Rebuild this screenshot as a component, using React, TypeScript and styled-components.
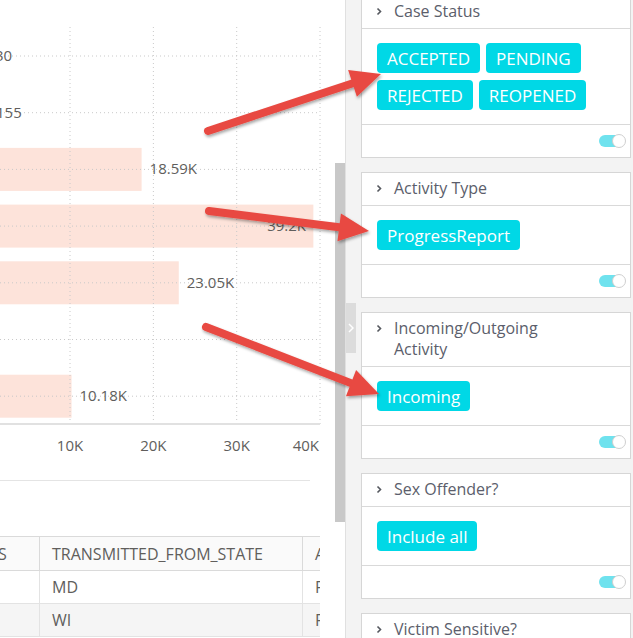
import React from "react";
import styled, { createGlobalStyle } from "styled-components";

const GlobalStyle = createGlobalStyle`
  html, body {
    margin: 0;
    padding: 0;
    background: #ffffff;
    overflow: hidden;
  }
  body {
    font-family: "Open Sans", "Noto Sans", sans-serif;
  }
`;

// chart data (values in units, null = no bar)
const chartValues: (number | null)[] = [30, 155, 18590, 39200, 23050, null, 10180];
const X0 = -13.3;
const PX_PER_K = 8.333;
const ROW0 = 56;
const ROW_STEP = 56.7;
const BAR_H = 43;
const PLOT_RIGHT = 320;
const AXIS_Y = 424;

function formatValue(v: number) {
  if (v < 1000) return String(v);
  return (v / 1000).toFixed(2).replace(/0$/, "") + "K";
}

type FilterCard = {
  title: string;
  chips: string[];
};

const filters: FilterCard[] = [
  { title: "Case Status", chips: ["ACCEPTED", "PENDING", "REJECTED", "REOPENED"] },
  { title: "Activity Type", chips: ["ProgressReport"] },
  { title: "Incoming/Outgoing Activity", chips: ["Incoming"] },
  { title: "Sex Offender?", chips: ["Include all"] },
  { title: "Victim Sensitive?", chips: [] },
];

const arrows = [
  { x1: 208, y1: 131, x2: 381, y2: 74 },
  { x1: 209, y1: 211, x2: 369, y2: 231 },
  { x1: 206, y1: 327, x2: 379, y2: 394 },
];

const BarChart = () => {
  const gridX = [1, 2, 3, 4].map((k) => X0 + k * 10 * PX_PER_K);
  return (
    <ChartSvg width={335} height={480}>
      {chartValues.map((v, i) => {
        if (v === null) return null;
        const cy = ROW0 + i * ROW_STEP;
        const end = X0 + (v / 1000) * PX_PER_K;
        return <rect key={i} x={X0} y={cy - BAR_H / 2} width={end - X0} height={BAR_H} fill="#fde3da" />;
      })}
      {gridX.map((x, i) => (
        <line key={"v" + i} x1={x} x2={x} y1={27} y2={AXIS_Y} stroke="#c9c9c9" strokeDasharray="1 3" />
      ))}
      {chartValues.map((_, i) => {
        const cy = ROW0 + i * ROW_STEP;
        return <line key={"h" + i} x1={0} x2={PLOT_RIGHT} y1={cy} y2={cy} stroke="#c9c9c9" strokeDasharray="1 3" />;
      })}
      <line x1={0} x2={PLOT_RIGHT} y1={AXIS_Y} y2={AXIS_Y} stroke="#e1e1e1" strokeWidth={2} />
      {chartValues.map((v, i) => {
        if (v === null) return null;
        const cy = ROW0 + i * ROW_STEP;
        const end = X0 + (v / 1000) * PX_PER_K;
        const inside = end + 50 > PLOT_RIGHT;
        return (
          <ChartText key={"l" + i} x={inside ? 306 : end + 8} y={cy + 5} textAnchor={inside ? "end" : "start"}>
            {formatValue(v)}
          </ChartText>
        );
      })}
      {gridX.map((x, i) => (
        <ChartText key={"a" + i} x={i === 3 ? 319 : x} y={451} textAnchor={i === 3 ? "end" : "middle"}>
          {(i + 1) * 10}K
        </ChartText>
      ))}
    </ChartSvg>
  );
};

const Toggle = () => (
  <ToggleBox>
    <ToggleTrack />
    <ToggleKnob />
  </ToggleBox>
);

const Chevron = () => (
  <svg width="6" height="9" viewBox="0 0 6 9">
    <path d="M1.5 1.5 L4.5 4.5 L1.5 7.5" fill="none" stroke="#55585f" strokeWidth="1.6" />
  </svg>
);

const Arrows = () => (
  <Overlay width={633} height={638}>
    <defs>
      <filter id="shadow" x="-20%" y="-20%" width="140%" height="140%">
        <feDropShadow dx="1" dy="2" stdDeviation="1.6" floodColor="#000" floodOpacity="0.35" />
      </filter>
    </defs>
    {arrows.map((a, i) => {
      const dx = a.x2 - a.x1;
      const dy = a.y2 - a.y1;
      const len = Math.sqrt(dx * dx + dy * dy);
      const ux = dx / len;
      const uy = dy / len;
      const bx = a.x2 - ux * 30;
      const by = a.y2 - uy * 30;
      const pts = [
        [a.x2, a.y2],
        [bx - uy * 14, by + ux * 14],
        [bx + uy * 14, by - ux * 14],
      ]
        .map((p) => p.join(","))
        .join(" ");
      return (
        <g key={i} filter="url(#shadow)">
          <line x1={a.x1} y1={a.y1} x2={bx + ux * 2} y2={by + uy * 2} stroke="#e84a42" strokeWidth={8} strokeLinecap="round" />
          <polygon points={pts} fill="#e84a42" />
        </g>
      );
    })}
  </Overlay>
);

const App = () => {
  return (
    <Page>
      <GlobalStyle />
      <LeftPane>
        <BarChart />
        <Divider />
        <TableWrap>
          <Table>
            <colgroup>
              <col style={{ width: 147 }} />
              <col style={{ width: 263 }} />
              <col style={{ width: 140 }} />
            </colgroup>
            <thead>
              <tr>
                <HeadCell>CASE_STATUS</HeadCell>
                <HeadCell>TRANSMITTED_FROM_STATE</HeadCell>
                <HeadCell>ACTIVITY</HeadCell>
              </tr>
            </thead>
            <tbody>
              <Row>
                <Cell></Cell>
                <Cell>MD</Cell>
                <Cell>FALSE</Cell>
              </Row>
              <Row $striped>
                <Cell></Cell>
                <Cell>WI</Cell>
                <Cell>FALSE</Cell>
              </Row>
            </tbody>
          </Table>
        </TableWrap>
      </LeftPane>
      <ScrollTrack>
        <ScrollThumb />
      </ScrollTrack>
      <FilterPane>
        <CollapseHandle>
          <svg width="6" height="10" viewBox="0 0 6 10">
            <path d="M1 1 L5 5 L1 9" fill="none" stroke="#ffffff" strokeWidth="1.5" />
          </svg>
        </CollapseHandle>
        <CardList>
          {filters.map((f) => (
            <Card key={f.title}>
              <CardHeader>
                <Chevron />
                <CardTitle>{f.title}</CardTitle>
              </CardHeader>
              {f.chips.length > 0 && (
                <>
                  <CardBody>
                    {f.chips.map((c) => (
                      <Chip key={c}>{c}</Chip>
                    ))}
                  </CardBody>
                  <CardFooter>
                    <Toggle />
                  </CardFooter>
                </>
              )}
            </Card>
          ))}
        </CardList>
      </FilterPane>
      <Arrows />
    </Page>
  );
};

export default App;

const Page = styled.div`
  position: relative;
  display: flex;
  width: 633px;
  height: 638px;
  overflow: hidden;
  background: #ffffff;
`;

const LeftPane = styled.div`
  width: 335px;
  flex-shrink: 0;
  display: flex;
  flex-direction: column;
  overflow: hidden;
`;

const ChartSvg = styled.svg`
  display: block;
  height: 480px;
  flex-shrink: 0;
`;

const ChartText = styled.text`
  font-family: "Open Sans", "Noto Sans", sans-serif;
  font-size: 15px;
  fill: #605e5c;
`;

const Divider = styled.div`
  width: 310px;
  height: 1px;
  background: #e4e4e4;
  flex-shrink: 0;
`;

const TableWrap = styled.div`
  margin-top: 55px;
  width: 320px;
  overflow: hidden;
`;

const Table = styled.table`
  border-collapse: collapse;
  table-layout: fixed;
  margin-left: -108px;
  width: 550px;
  font-size: 16px;
  color: #605e5c;
`;

const HeadCell = styled.th`
  height: 33px;
  padding: 0 12px;
  text-align: left;
  font-weight: 400;
  white-space: nowrap;
  overflow: hidden;
  background: #fafafa;
  border: 1px solid #dadada;
`;

const Row = styled.tr<{ $striped?: boolean }>`
  background: ${(p) => (p.$striped ? "#f5f5f5" : "#ffffff")};
`;

const Cell = styled.td`
  height: 32px;
  padding: 0 12px;
  white-space: nowrap;
  overflow: hidden;
  border: 1px solid #e3e3e3;
`;

const ScrollTrack = styled.div`
  width: 10px;
  flex-shrink: 0;
  background: #ffffff;
`;

const ScrollThumb = styled.div`
  margin-top: 163px;
  height: 359px;
  background: #c8c8c8;
`;

const FilterPane = styled.div`
  position: relative;
  flex: 1;
  background: #f3f3f3;
  border-left: 1px solid #e0e0e0;
  padding: 0 2px 0 15px;
`;

const CollapseHandle = styled.div`
  position: absolute;
  left: 0;
  top: 303px;
  width: 10px;
  height: 50px;
  background: #dcdcdc;
  display: flex;
  align-items: center;
  justify-content: center;
`;

const CardList = styled.div`
  margin-top: -5px;
  display: flex;
  flex-direction: column;
  gap: 14px;
`;

const Card = styled.div`
  background: #ffffff;
  border: 1px solid #d6d6d6;
`;

const CardHeader = styled.div`
  display: flex;
  align-items: flex-start;
  gap: 12px;
  padding: 5px 12px 6px 14px;
  svg {
    margin-top: 6px;
    flex-shrink: 0;
  }
`;

const CardTitle = styled.div`
  max-width: 165px;
  font-size: 16px;
  line-height: 21px;
  color: #5b5e6b;
`;

const CardBody = styled.div`
  display: flex;
  flex-wrap: wrap;
  gap: 7px 6px;
  padding: 14px 15px;
  border-top: 1px solid #d9d9d9;
  border-bottom: 1px solid #d9d9d9;
`;

const Chip = styled.span`
  display: inline-flex;
  align-items: center;
  height: 30px;
  padding: 0 10px;
  border-radius: 4px;
  background: #00d8e6;
  color: #ffffff;
  font-size: 17px;
`;

const CardFooter = styled.div`
  height: 32px;
  display: flex;
  align-items: center;
  justify-content: flex-end;
  padding-right: 4px;
`;

const ToggleBox = styled.span`
  position: relative;
  width: 27px;
  height: 14px;
`;

const ToggleTrack = styled.span`
  position: absolute;
  left: 0;
  top: 1px;
  width: 22px;
  height: 12px;
  border-radius: 6px;
  background: #6fe2ee;
`;

const ToggleKnob = styled.span`
  position: absolute;
  right: 0;
  top: 0;
  width: 12px;
  height: 12px;
  border-radius: 50%;
  background: #ffffff;
  border: 1px solid #cfcfcf;
`;

const Overlay = styled.svg`
  position: absolute;
  left: 0;
  top: 0;
  pointer-events: none;
`;
